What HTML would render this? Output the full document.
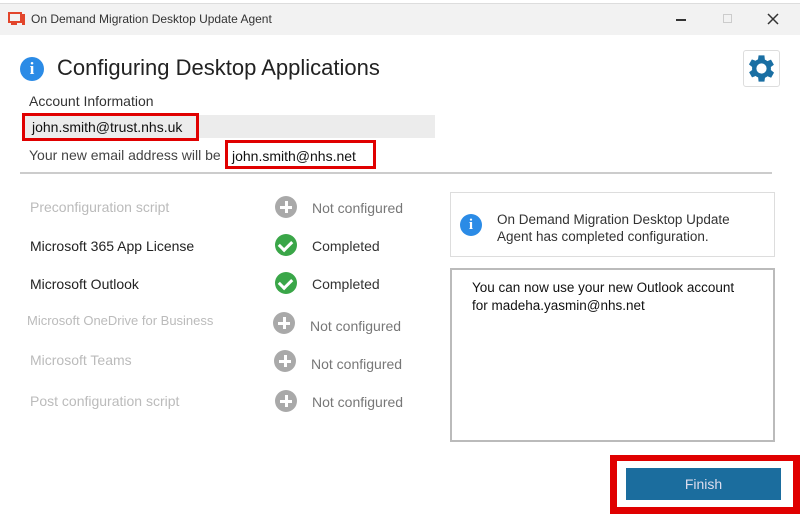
<!DOCTYPE html>
<html><head><style>
*{margin:0;padding:0;box-sizing:border-box}
body{width:800px;height:515px;background:#fff;font-family:"Liberation Sans",sans-serif;position:relative;overflow:hidden}
.a{position:absolute}
.row{position:absolute;left:30px;font-size:14px}
.st{position:absolute;left:312px;font-size:14px}
.ic{position:absolute;left:275px;width:22px;height:22px;border-radius:50%}
.plus{background:#a9a9a9}
.plus:before{content:"";position:absolute;left:5px;top:9.5px;width:12px;height:3px;background:#fff}
.plus:after{content:"";position:absolute;left:9.5px;top:5px;width:3px;height:12px;background:#fff}
.ok{background:#3aa648}
.ok:after{content:"";position:absolute;left:6px;top:4px;width:6px;height:10px;border:solid #fff;border-width:0 3px 3px 0;transform:rotate(45deg)}
</style></head><body>
<div class="a" style="left:0;top:3px;width:800px;height:32px;background:#f2f2f2;border-top:1px solid #ddd"></div>
<svg class="a" style="left:8px;top:12px" width="18" height="14"><rect x="1" y="1" width="12" height="9" fill="none" stroke="#e2452b" stroke-width="2"/><rect x="3" y="11" width="6" height="2" fill="#e2452b"/><rect x="14" y="2" width="3" height="11" fill="#e2452b"/></svg>
<div class="a" style="left:31px;top:12px;font-size:12px;color:#333">On Demand Migration Desktop Update Agent</div>
<div class="a" style="left:676px;top:19px;width:10px;height:2px;background:#333"></div>
<div class="a" style="left:723px;top:14px;width:9px;height:9px;border:1px solid #ccc"></div>
<svg class="a" style="left:767px;top:13px" width="12" height="12"><path d="M1 1L11 11M11 1L1 11" stroke="#333" stroke-width="1.5"/></svg>
<div class="a" style="left:20px;top:57px;width:24px;height:24px;border-radius:50%;background:#2b8be6;color:#fff;font-weight:bold;font-size:17px;text-align:center;line-height:24px;font-family:'Liberation Serif',serif">i</div>
<div class="a" style="left:57px;top:55px;font-size:22px;color:#222">Configuring Desktop Applications</div>
<div class="a" style="left:743px;top:50px;width:37px;height:37px;border:1px solid #ddd;border-radius:3px"></div>
<svg class="a" style="left:744px;top:51px" width="35" height="35" viewBox="0 0 24 24"><path fill="#1a6fa3" d="M19.4 13a7.5 7.5 0 0 0 0-2l2.1-1.6-2-3.5-2.5 1a7 7 0 0 0-1.7-1L15 3h-4l-.4 2.7a7 7 0 0 0-1.7 1l-2.5-1-2 3.5L6.6 11a7.5 7.5 0 0 0 0 2l-2.1 1.6 2 3.5 2.5-1a7 7 0 0 0 1.7 1L11 21h4l.4-2.7a7 7 0 0 0 1.7-1l2.5 1 2-3.5zM13 15.5a3.5 3.5 0 1 1 0-7 3.5 3.5 0 0 1 0 7z" transform="translate(-1 0)"/></svg>
<div class="a" style="left:29px;top:93px;font-size:14px;color:#333">Account Information</div>
<div class="a" style="left:22px;top:115px;width:413px;height:23px;background:#ececec"></div>
<div class="a" style="left:22px;top:113px;width:177px;height:28px;border:3px solid #e00000;background:#ececec;font-size:14px;padding:3px 0 0 7px;color:#111">john.smith@trust.nhs.uk</div>
<div class="a" style="left:29px;top:147px;font-size:14px;color:#444">Your new email address will be</div>
<div class="a" style="left:225px;top:140px;width:151px;height:29px;border:3px solid #e00000;background:#fff;font-size:14px;padding:5px 0 0 4px;color:#111">john.smith@nhs.net</div>
<div class="a" style="left:20px;top:172px;width:752px;height:2px;background:#ccc"></div>

<div class="row" style="top:199px;color:#bbb">Preconfiguration script</div>
<div class="ic plus" style="top:196px"></div><div class="st" style="top:200px;color:#777">Not configured</div>
<div class="row" style="top:238px;color:#222">Microsoft 365 App License</div>
<div class="ic ok" style="top:234px"></div><div class="st" style="top:238px;color:#333">Completed</div>
<div class="row" style="top:276px;color:#222">Microsoft Outlook</div>
<div class="ic ok" style="top:272px"></div><div class="st" style="top:276px;color:#333">Completed</div>
<div class="row" style="top:313px;left:27px;font-size:13px;color:#bbb">Microsoft OneDrive for Business</div>
<div class="ic plus" style="top:312px;left:273px"></div><div class="st" style="top:318px;left:310px;color:#777">Not configured</div>
<div class="row" style="top:352px;color:#bbb">Microsoft Teams</div>
<div class="ic plus" style="top:350px;left:274px"></div><div class="st" style="top:356px;left:311px;color:#777">Not configured</div>
<div class="row" style="top:393px;color:#bbb">Post configuration script</div>
<div class="ic plus" style="top:390px"></div><div class="st" style="top:394px;color:#777">Not configured</div>

<div class="a" style="left:450px;top:192px;width:325px;height:65px;border:1px solid #ddd"></div>
<div class="a" style="left:460px;top:214px;width:22px;height:22px;border-radius:50%;background:#2b8be6;color:#fff;font-weight:bold;font-size:15px;text-align:center;line-height:22px;font-family:'Liberation Serif',serif">i</div>
<div class="a" style="left:497px;top:211px;font-size:13.5px;line-height:17px;color:#333">On Demand Migration Desktop Update<br>Agent has completed configuration.</div>
<div class="a" style="left:450px;top:268px;width:325px;height:174px;border:2px solid #bbb"></div>
<div class="a" style="left:472px;top:279px;font-size:13.5px;line-height:18px;color:#111">You can now use your new Outlook account<br>for madeha.yasmin@nhs.net</div>
<div class="a" style="left:610px;top:455px;width:190px;height:59px;background:#e00000"></div>
<div class="a" style="left:617px;top:461px;width:176px;height:46px;background:#fff"></div>
<div class="a" style="left:626px;top:468px;width:155px;height:32px;background:#1b6d9e;color:#dde;font-size:14px;text-align:center;line-height:32px">Finish</div>
</body></html>
